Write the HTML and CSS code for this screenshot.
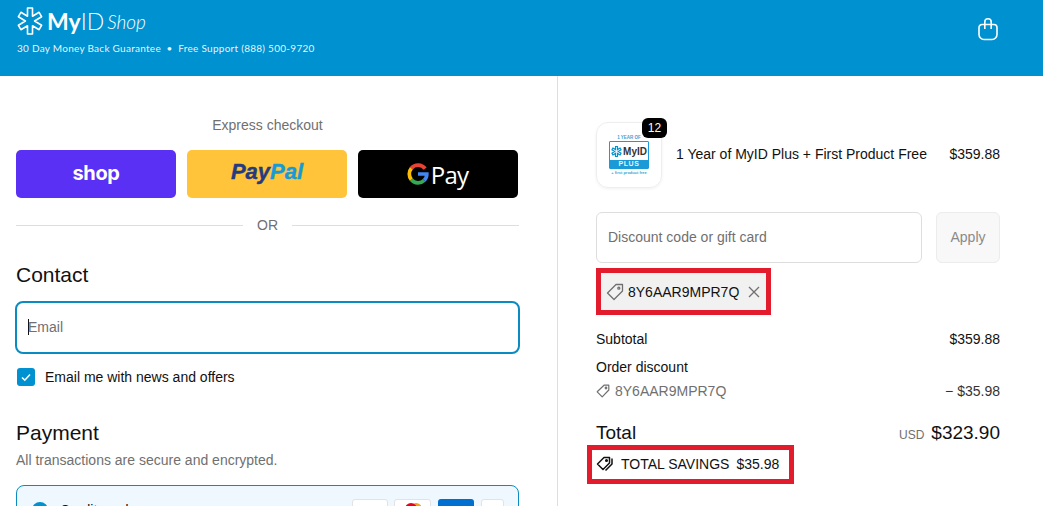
FILE: index.html
```html
<!DOCTYPE html>
<html lang="en">
<head>
  <meta charset="UTF-8" />
  <meta name="viewport" content="width=device-width, initial-scale=1.0" />
  <title>Checkout - MyID Shop</title>
  <link rel="stylesheet" href="styles.css">
</head>
<body>
  <header class="topbar">
    <div class="brand">
      <div class="logo">
        <svg class="logo-star" viewBox="0 0 28 28" width="28" height="28" fill="none" stroke="#fff" stroke-width="1.6" stroke-linejoin="round">
          <path d="M11.5 1h5v8.2l6.6-3.9 2.5 4.4-7 4.3 7 4.3-2.5 4.4-6.6-3.9V27h-5v-8.200l-6.600 3.900-2.500-4.400 7-4.300-7-4.300 2.500-4.400 6.600 3.900z"/>
        </svg>
        <span class="logo-my">My</span><span class="logo-id">ID</span><span class="logo-shop">Shop</span>
      </div>
      <div class="tagline">30 Day Money Back Guarantee &nbsp;•&nbsp; Free Support (888) 500-9720</div>
    </div>
    <svg class="bag" viewBox="0 0 20 23" width="20" height="23" fill="none" stroke="#fff" stroke-width="1.6">
      <path d="M4 6.500h12a3 3 0 0 1 3 3v7a5 5 0 0 1-5 5H6a5 5 0 0 1-5-5v-7a3 3 0 0 1 3-3z"/>
      <path d="M6.800 11V4a3.200 3.200 0 0 1 6.400 0v7" />
    </svg>
  </header>

  <main class="layout">
    <section class="left">
      <p class="express-title">Express checkout</p>
      <div class="express-row">
        <div class="pay-btn shop-btn"><span>shop</span></div>
        <div class="pay-btn paypal-btn"><span class="pp-dark">Pay</span><span class="pp-light">Pal</span></div>
        <div class="pay-btn gpay-btn">
          <svg viewBox="0 0 20 20" width="22" height="22" fill="none" stroke-width="3.400">
            <path d="M16.500 5.200A8 8 0 0 0 4 4.800" stroke="#ea4335"/>
            <path d="M4 4.800a8 8 0 0 0 0 10.400" stroke="#fbbc05"/>
            <path d="M4 15.200a8 8 0 0 0 11.600 .6" stroke="#34a853"/>
            <path d="M15.600 15.800A8 8 0 0 0 18 10H10" stroke="#4285f4"/>
          </svg>
          <span>Pay</span>
        </div>
      </div>
      <div class="or-row"><span class="or-line"></span><span class="or-text">OR</span><span class="or-line"></span></div>

      <h2 class="contact-title">Contact</h2>
      <div class="email-input"><span class="caret"></span><span>Email</span></div>
      <div class="check-row">
        <span class="checkbox">
          <svg viewBox="0 0 12 12" width="12" height="12" fill="none" stroke="#fff" stroke-width="1.600"><path d="M2 6.500l2.800 2.700L10 3.500"/></svg>
        </span>
        <span>Email me with news and offers</span>
      </div>

      <h2 class="payment-title">Payment</h2>
      <p class="payment-sub">All transactions are secure and encrypted.</p>
      <div class="card-box">
        <span class="radio"></span>
        <span class="card-label">Credit card</span>
        <div class="card-icons">
          <span class="card-icon visa"></span>
          <span class="card-icon mc"><i></i></span>
          <span class="card-icon amex"></span>
          <span class="card-icon more"></span>
        </div>
      </div>
    </section>

    <section class="right">
      <div class="product">
        <div class="thumb">
          <div class="thumb-top">1 YEAR OF</div>
          <div class="thumb-card">
            <div class="thumb-logo">
              <svg viewBox="0 0 28 28" width="11" height="11" fill="none" stroke="#0091d0" stroke-width="3">
                <path d="M11.500 1h5v8.200l6.600-3.900 2.500 4.400-7 4.300 7 4.300-2.500 4.400-6.600-3.900V27h-5v-8.200l-6.600 3.900-2.500-4.400 7-4.300-7-4.300 2.500-4.400 6.600 3.900z"/>
              </svg>
              <span>MyID</span>
            </div>
            <div class="thumb-plus">PLUS</div>
          </div>
          <div class="thumb-foot">+ first product free</div>
          <span class="qty">12</span>
        </div>
        <div class="product-name">1 Year of MyID Plus + First Product Free</div>
        <div class="product-price">$359.88</div>
      </div>

      <div class="discount-row">
        <div class="discount-input">Discount code or gift card</div>
        <div class="apply">Apply</div>
      </div>

      <div class="code-frame">
        <div class="code-chip">
          <svg viewBox="0 0 18 18" width="18" height="18" fill="none" stroke="#707070" stroke-width="1.300" stroke-linejoin="round">
            <path d="M10 1.500h6.500V8L8 16.500 1.500 10z"/>
            <circle cx="12.800" cy="5.200" r="1"/>
          </svg>
          <span>8Y6AAR9MPR7Q</span>
          <svg class="chip-x" viewBox="0 0 12 12" width="12" height="12" fill="none" stroke="#707070" stroke-width="1.300"><path d="M1 1l10 10M11 1L1 11"/></svg>
        </div>
      </div>

      <div class="sum-row subtotal"><span>Subtotal</span><span>$359.88</span></div>
      <div class="sum-row order-discount"><span>Order discount</span></div>
      <div class="sum-row code-line">
        <span class="code-name">
          <svg viewBox="0 0 14 14" width="14" height="14" fill="none" stroke="#707070" stroke-width="1.200" stroke-linejoin="round">
            <path d="M8 1.200h4.800V6L6.200 12.800 1.200 7.800z"/>
            <circle cx="10" cy="4" r=".8"/>
          </svg>
          8Y6AAR9MPR7Q
        </span>
        <span class="minus">− $35.98</span>
      </div>

      <div class="total-row">
        <span class="total-label">Total</span>
        <span><span class="usd">USD</span><span class="total-price">$323.90</span></span>
      </div>

      <div class="savings-frame">
        <svg viewBox="0 0 18 18" width="18" height="18" fill="none" stroke="#111" stroke-width="1.500" stroke-linejoin="round">
          <path d="M8 2.500h5.500V8L7 14.500 1.500 9z"/>
          <path d="M16 3.500V9l-6.500 6.500"/>
          <circle cx="10.500" cy="5.500" r=".8"/>
        </svg>
        <span>TOTAL SAVINGS</span>
        <span>$35.98</span>
      </div>
    </section>
  </main>
</body>
</html>
```

FILE: styles.css
```css
html, body {
  height: 506px;
  overflow: hidden;
}
body {
  margin: 0;
  font-family: "Liberation Sans", Arial, sans-serif;
  font-size: 14px;
  color: #111;
  background: #fff;
}
p, h2 {
  margin: 0;
}

.topbar {
  height: 76px;
  box-sizing: border-box;
  background: #0091d0;
  color: #fff;
  display: flex;
  justify-content: space-between;
  padding: 6px 45px 0 16px;
}
.logo {
  display: flex;
  align-items: center;
  height: 30px;
  font-family: Lato, sans-serif;
  font-size: 23px;
  line-height: 30px;
}
.logo-star {
  margin-right: 3px;
}
.logo-my {
  font-weight: 700;
}
.logo-id {
  font-weight: 300;
}
.logo-shop {
  font-size: 19px;
  font-style: italic;
  font-weight: 300;
  margin-left: 3px;
  margin-top: 1px;
}
.tagline {
  font-family: Lato, sans-serif;
  font-size: 10px;
  letter-spacing: 0.27px;
  margin-top: 6px;
  padding-left: 1px;
  color: rgba(255, 255, 255, 0.92);
}
.bag {
  margin-top: 12px;
}

.layout {
  display: flex;
  height: 430px;
}
.left {
  width: 558px;
  box-sizing: border-box;
  border-right: 1px solid #dedede;
  padding: 41px 38px 0 16px;
}
.right {
  flex: 1;
  padding: 46px 43px 0 38px;
}

.express-title {
  text-align: center;
  color: #707070;
  line-height: 16px;
}
.express-row {
  display: flex;
  gap: 11px;
  margin-top: 17px;
}
.pay-btn {
  width: 160px;
  height: 48px;
  border-radius: 5px;
  display: flex;
  align-items: center;
  justify-content: center;
}
.shop-btn {
  background: #5a31f4;
  color: #fff;
  font-family: Inter, sans-serif;
  font-size: 20px;
  font-weight: 700;
  letter-spacing: -0.4px;
  padding-bottom: 3px;
  box-sizing: border-box;
}
.paypal-btn {
  background: #ffc439;
  font-size: 22px;
  font-weight: 700;
  font-style: italic;
  -webkit-text-stroke: 0.4px;
  padding-bottom: 4px;
  box-sizing: border-box;
}
.pp-dark {
  color: #253b80;
}
.pp-light {
  color: #179bd7;
}
.gpay-btn {
  background: #000;
  color: #fff;
  gap: 2px;
  font-family: "Open Sans", sans-serif;
  font-size: 24px;
  letter-spacing: -0.7px;
  padding-right: 1px;
  box-sizing: border-box;
}
.or-row {
  display: flex;
  align-items: center;
  gap: 14px;
  margin-top: 18px;
  color: #707070;
  line-height: 18px;
}
.or-line {
  flex: 1;
  height: 1px;
  background: #dedede;
}

.contact-title, .payment-title {
  font-size: 21px;
  font-weight: 400;
  line-height: 26px;
}
.contact-title {
  margin-top: 28px;
}
.email-input {
  margin: 13px -1px 0;
  height: 53px;
  box-sizing: border-box;
  border: 2px solid #0a8bc1;
  border-radius: 8px;
  display: flex;
  align-items: center;
  padding: 0 0 2px 11px;
  color: #707070;
}
.caret {
  width: 1px;
  height: 16px;
  background: #111;
  margin-right: -1px;
}
.check-row {
  display: flex;
  align-items: center;
  gap: 10px;
  margin-top: 14px;
  padding-left: 1px;
  line-height: 18px;
}
.checkbox {
  width: 18px;
  height: 18px;
  border-radius: 3px;
  background: #0091d0;
  display: flex;
  align-items: center;
  justify-content: center;
}
.payment-title {
  margin-top: 34px;
}
.payment-sub {
  color: #707070;
  margin-top: 6px;
  line-height: 16px;
}
.card-box {
  margin-top: 17px;
  height: 60px;
  box-sizing: border-box;
  border: 1px solid #0a8bc1;
  border-radius: 8px;
  background: #f0f8ff;
  display: flex;
  align-items: flex-start;
  padding: 13px 14px 0 15px;
}
.radio {
  width: 16px;
  height: 16px;
  border-radius: 50%;
  background: #0091d0;
  margin-top: 3px;
}
.card-label {
  margin-left: 12px;
  margin-top: 3px;
}
.card-icons {
  margin-left: auto;
  display: flex;
  gap: 6px;
}
.card-icon {
  height: 24px;
  width: 36px;
  box-sizing: border-box;
  background: #fff;
  border: 1px solid #e3e3e3;
  border-radius: 3px;
  display: block;
}
.card-icon.mc {
  width: 37px;
  padding: 3px 0 0 10px;
}
.card-icon.amex {
  background: #016fd0;
  border: 0;
  margin-left: 1px;
}
.card-icon.more {
  width: 23px;
  margin-left: 1px;
}
.card-icon.mc i {
  display: block;
  width: 12px;
  height: 12px;
  border-radius: 50%;
  background: #eb001b;
  box-shadow: 5px 0 0 #f79e1b;
}

.product {
  display: flex;
  align-items: center;
  height: 66px;
}
.thumb {
  width: 66px;
  height: 66px;
  box-sizing: border-box;
  border: 1px solid #eee;
  border-radius: 12px;
  box-shadow: 0 1px 3px rgba(0, 0, 0, 0.06);
  position: relative;
  display: flex;
  flex-direction: column;
  align-items: center;
  justify-content: center;
  color: #3aa3d4;
}
.thumb-top {
  font-size: 4.500px;
  font-weight: 700;
  line-height: 7px;
}
.thumb-card {
  width: 40px;
  box-sizing: border-box;
  border: 1px solid #1a9ad6;
  border-radius: 1px;
}
.thumb-logo {
  height: 18px;
  display: flex;
  align-items: center;
  justify-content: center;
  gap: 1px;
  font-size: 10px;
  font-weight: 700;
  color: #333;
}
.thumb-plus {
  background: #1a9ad6;
  color: #e6f5fc;
  text-align: center;
  font-size: 7px;
  font-weight: 700;
  letter-spacing: 0.6px;
  line-height: 8px;
}
.thumb-foot {
  font-size: 4px;
  line-height: 7px;
  font-weight: 700;
}
.qty {
  position: absolute;
  top: -5px;
  right: -6px;
  min-width: 25px;
  height: 20px;
  border-radius: 6px;
  background: #000;
  color: #fff;
  font-size: 12px;
  line-height: 20px;
  text-align: center;
}
.product-name {
  flex: 1;
  margin-left: 14px;
  padding-bottom: 2px;
}
.product-price {
  padding-bottom: 2px;
}

.discount-row {
  display: flex;
  gap: 14px;
  margin-top: 24px;
}
.discount-input {
  flex: 1;
  height: 51px;
  box-sizing: border-box;
  border: 1px solid #dedede;
  border-radius: 6px;
  padding-left: 11px;
  line-height: 49px;
  color: #707070;
}
.apply {
  width: 64px;
  height: 51px;
  box-sizing: border-box;
  border: 1px solid #ececec;
  border-radius: 6px;
  background: #f8f8f8;
  color: #8a8a8a;
  text-align: center;
  line-height: 49px;
}

.code-frame {
  width: fit-content;
  margin-top: 5px;
  border: 5px solid #e31c2d;
}
.code-chip {
  display: flex;
  align-items: center;
  height: 37px;
  box-sizing: border-box;
  padding: 0 6px 0 5px;
  gap: 4px;
  background: #f1f1f1;
}
.chip-x {
  margin-left: 5px;
}

.sum-row {
  display: flex;
  justify-content: space-between;
  line-height: 16px;
}
.subtotal {
  margin-top: 16px;
}
.order-discount {
  margin-top: 12px;
}
.code-line {
  margin-top: 8px;
  color: #707070;
}
.code-name {
  display: flex;
  align-items: center;
  gap: 5px;
}
.minus {
  color: #333;
}
.total-row {
  display: flex;
  justify-content: space-between;
  align-items: baseline;
  margin-top: 22px;
  line-height: 24px;
}
.total-label {
  font-size: 19px;
}
.usd {
  font-size: 12px;
  color: #707070;
  margin-right: 7px;
}
.total-price {
  font-size: 19px;
}
.savings-frame {
  width: fit-content;
  margin: -2px 0 0 -9px;
  border: 5px solid #e31c2d;
  display: flex;
  align-items: center;
  height: 39px;
  box-sizing: border-box;
  padding: 0 10px 2px 4px;
  gap: 7px;
  font-size: 14px;
}
```
